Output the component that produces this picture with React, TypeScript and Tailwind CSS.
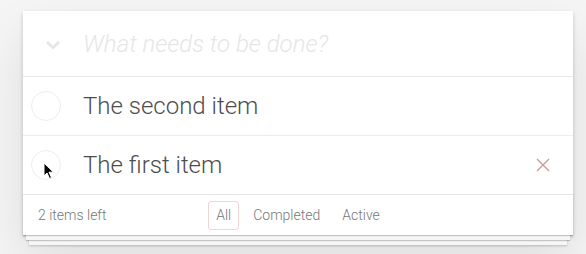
import React from "react";

type Todo = { id: number; title: string; hover?: boolean };

const todos: Todo[] = [
  { id: 2, title: "The second item" },
  { id: 1, title: "The first item", hover: true },
];

function Circle() {
  return (
    <svg width="30" height="30" viewBox="0 0 30 30" className="shrink-0">
      <circle cx="15" cy="15" r="14.5" fill="none" stroke="#ededed" strokeWidth="1" />
    </svg>
  );
}

function Cursor() {
  return (
    <svg width="12" height="18" viewBox="0 0 12 18" className="absolute left-[20px] top-[26px]">
      <path d="M1 1 L1 14 L4 11 L6.5 16.5 L8.5 15.6 L6 10.2 L10.5 10.2 Z" fill="#000" stroke="#fff" strokeWidth="1" strokeLinejoin="round" />
    </svg>
  );
}

export default function App() {
  return (
    <div className="min-h-[254px] bg-[#f5f5f5] pl-[23px] pt-[11px] font-['Roboto','Liberation_Sans',sans-serif] font-light text-[#4d4d4d]">
      <section className="relative w-[550px] bg-white shadow-[0_2px_4px_0_rgba(0,0,0,0.2),0_25px_50px_0_rgba(0,0,0,0.1)]">
        <header className="flex h-[65px] items-center">
          <div className="flex w-[60px] justify-center pt-[3px]">
            <svg width="16" height="10" viewBox="0 0 16 10">
              <path d="M2 2 L8 7.5 L14 2" fill="none" stroke="#e6e6e6" strokeWidth="3" />
            </svg>
          </div>
          <span className="text-[24px] italic text-[#e6e6e6]">What needs to be done?</span>
        </header>

        <ul className="border-t border-[#e6e6e6]">
          {todos.map((t, i) => (
            <li
              key={t.id}
              className={`relative flex h-[58px] items-center ${i < todos.length - 1 ? "box-content border-b border-[#ededed]" : ""}`}
            >
              <div className="flex w-[60px] justify-start pl-[8px]">
                <Circle />
              </div>
              <span className="flex-1 text-[24px] leading-[1.2]">{t.title}</span>
              {t.hover && (
                <svg width="14" height="14" viewBox="0 0 14 14" className="mr-[23px]">
                  <path d="M1 1 L13 13 M13 1 L1 13" stroke="#cc9a9a" strokeWidth="1.4" />
                </svg>
              )}
              {t.hover && <Cursor />}
            </li>
          ))}
        </ul>

        <footer className="relative grid h-[41px] grid-cols-[1fr_auto_1fr] items-center border-t border-[#e6e6e6] px-[15px] text-[14px] text-[#777]">
          <div className="pointer-events-none absolute inset-x-0 bottom-0 h-[41px] shadow-[0_1px_1px_rgba(0,0,0,0.2),0_8px_0_-3px_#f6f6f6,0_9px_1px_-3px_rgba(0,0,0,0.2),0_16px_0_-6px_#f6f6f6,0_17px_2px_-6px_rgba(0,0,0,0.2)]" />
          <span className="relative">2 items left</span>
          <ul className="relative flex items-center">
            <li className="m-[3px] rounded-[3px] border border-[rgba(175,47,47,0.2)] px-[7px] py-[3px]">All</li>
            <li className="m-[3px] rounded-[3px] border border-transparent px-[7px] py-[3px]">Completed</li>
            <li className="m-[3px] rounded-[3px] border border-transparent px-[7px] py-[3px]">Active</li>
          </ul>
          <span />
        </footer>
      </section>
    </div>
  );
}
